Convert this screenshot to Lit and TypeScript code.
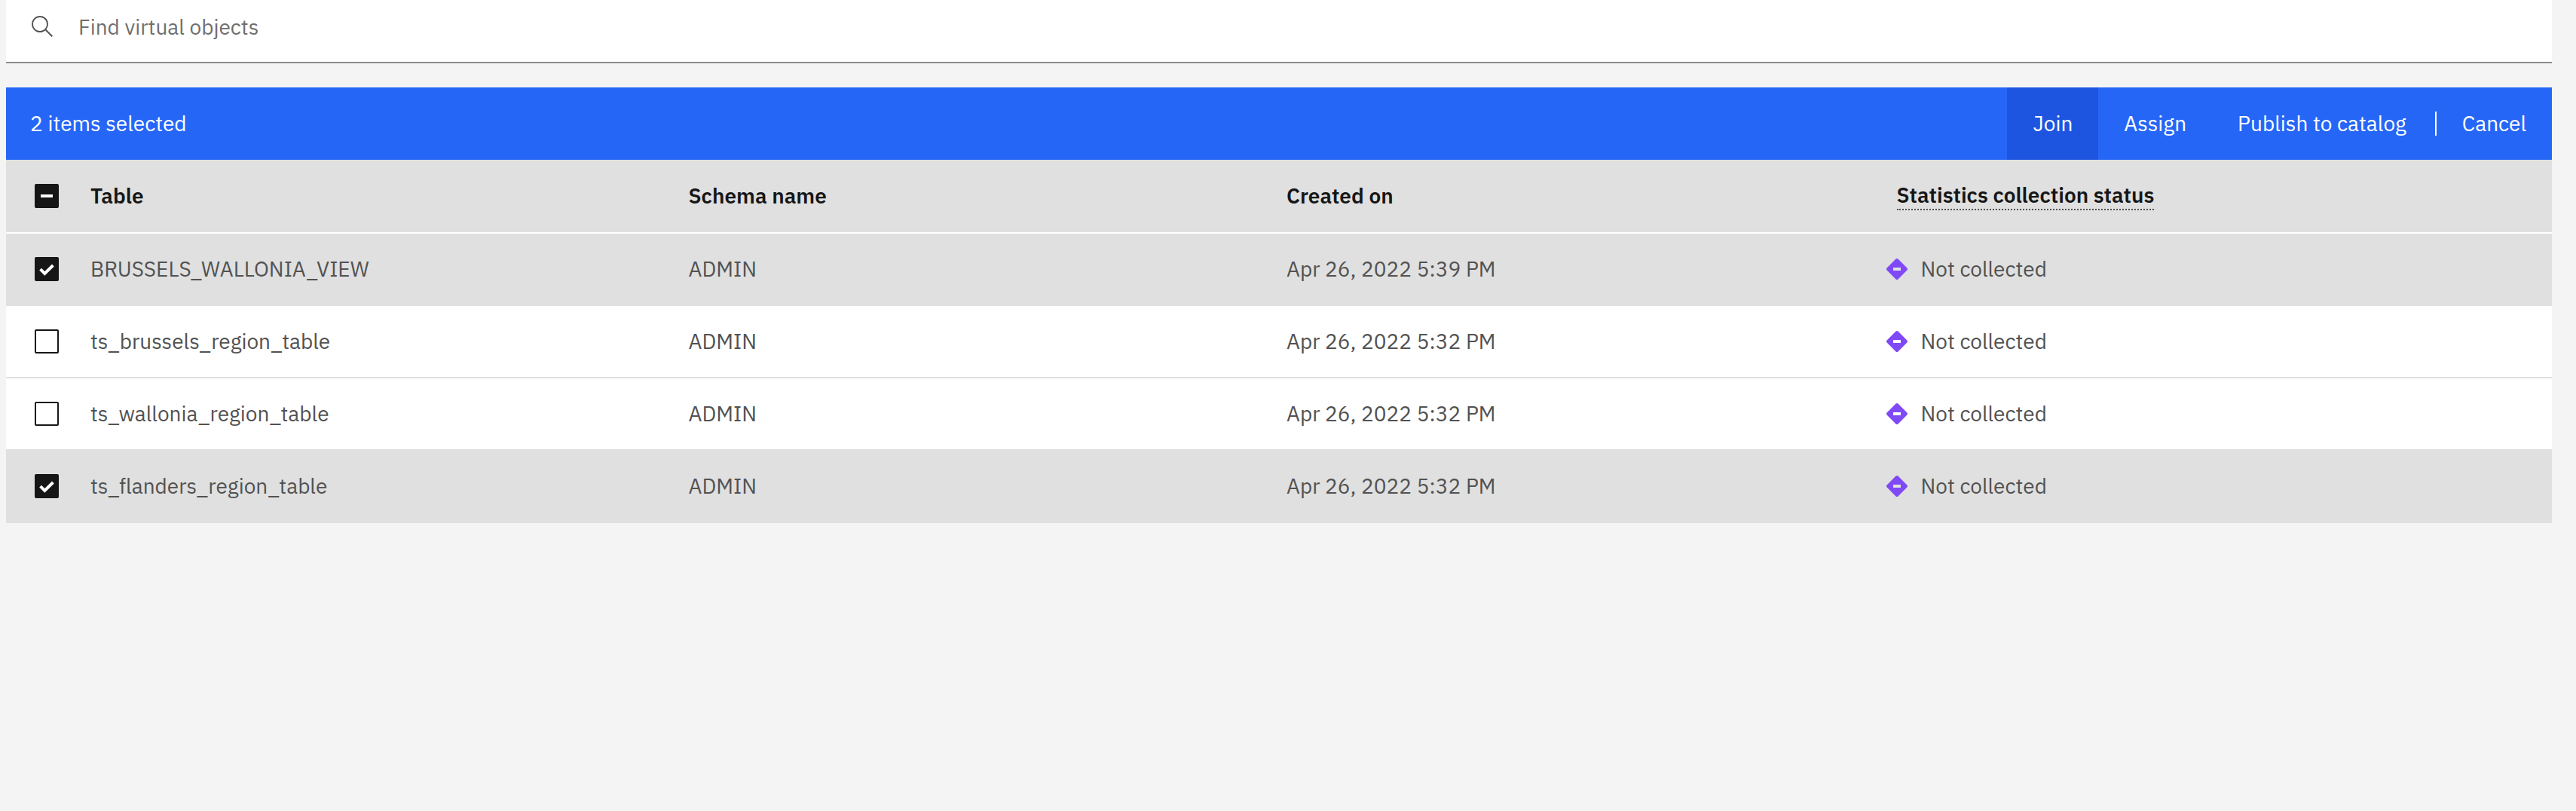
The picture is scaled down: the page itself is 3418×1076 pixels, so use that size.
import { LitElement, html, css, svg, nothing } from "lit";
import { customElement, property, state } from "lit/decorators.js";
import { classMap } from "lit/directives/class-map.js";
import { live } from "lit/directives/live.js";

interface VirtualObject {
  name: string;
  schema: string;
  created: string;
  status: string;
  selected: boolean;
}

@customElement("check-box")
class CheckBox extends LitElement {
  static styles = css`
    :host {
      display: block;
    }
    .box {
      display: grid;
      width: 32px;
      height: 32px;
    }
    .input,
    .mark {
      grid-area: 1 / 1;
      width: 32px;
      height: 32px;
    }
    .input {
      appearance: none;
      box-sizing: border-box;
      margin: 0;
      border: 2px solid #161616;
      border-radius: 2px;
      cursor: pointer;
    }
    .input:checked,
    .input:indeterminate {
      background: #161616;
    }
    .input:focus-visible {
      outline: 2px solid #0f62fe;
      outline-offset: 2px;
    }
    .mark {
      pointer-events: none;
      fill: none;
      stroke: #fff;
      stroke-width: 4;
    }
  `;

  @property() label = "";
  @property({ type: Boolean }) checked = false;
  @property({ type: Boolean }) indeterminate = false;

  private onChange() {
    this.dispatchEvent(new CustomEvent("toggle-check"));
  }

  render() {
    const mark = this.indeterminate
      ? svg`<path d="M8 16H24"/>`
      : this.checked
        ? svg`<path d="M7.6 16.2L13.3 21.9L24.4 11"/>`
        : nothing;
    return html`
      <label class="box">
        <input
          class="input"
          type="checkbox"
          aria-label=${this.label}
          .checked=${live(this.checked)}
          .indeterminate=${live(this.indeterminate)}
          @change=${this.onChange}
        />
        <svg class="mark" viewBox="0 0 32 32" aria-hidden="true">${mark}</svg>
      </label>
    `;
  }
}

@customElement("app-root")
class AppRoot extends LitElement {
  static styles = css`
    :host {
      display: block;
      box-sizing: border-box;
      min-height: 100vh;
      padding: 0 32px 32px 8px;
      background: #f4f4f4;
      color: #525252;
      font-family: "IBM Plex Sans", Roboto, "Liberation Sans", sans-serif;
      font-size: 28px;
      line-height: 36px;
    }
    .search {
      display: flex;
      align-items: center;
      gap: 32px;
      margin-bottom: 32px;
      padding: 0 32px 12px;
      border-bottom: 2px solid #8d8d8d;
      background: #fff;
    }
    .icon {
      display: block;
      flex: none;
      width: 32px;
      height: 32px;
      fill: currentColor;
    }
    .search-input {
      flex: 1;
      min-width: 0;
      height: 70px;
      padding: 0;
      border: 0;
      outline: 0;
      background: transparent;
      color: #161616;
      font: inherit;
    }
    .search-input::placeholder {
      color: #6f6f6f;
      opacity: 1;
    }
    .toolbar {
      display: flex;
      align-items: center;
      justify-content: space-between;
      padding-left: 32px;
      background: #2666f6;
      color: #fff;
    }
    .actions {
      display: flex;
      align-items: center;
    }
    .action {
      height: 96px;
      padding: 0 34px;
      border: 0;
      background: transparent;
      color: inherit;
      font: inherit;
      white-space: nowrap;
      cursor: pointer;
    }
    .action.active,
    .action:hover {
      background: #1d55e0;
    }
    .divider {
      width: 2px;
      height: 32px;
      margin-left: 4px;
      background: #fff;
    }
    .table {
      width: 100%;
      table-layout: fixed;
      border-collapse: separate;
      border-spacing: 0;
    }
    .check-col {
      width: 80px;
    }
    .end-col {
      width: 124px;
    }
    .head,
    .cell {
      box-sizing: border-box;
      height: 96px;
      padding: 0 0 0 32px;
      text-align: left;
      vertical-align: middle;
    }
    .head {
      background: #e0e0e0;
      color: #161616;
      font-weight: 600;
    }
    .cell {
      border-bottom: 2px solid #e0e0e0;
      background: #fff;
    }
    .selected .cell {
      background: #e0e0e0;
    }
    .row:first-child .cell {
      height: 98px;
      border-top: 2px solid #fff;
    }
    .head.check,
    .cell.check {
      padding-left: 38px;
    }
    .head.status-head {
      padding-left: 48px;
    }
    .term {
      display: block;
      width: fit-content;
      padding: 0;
      border: 0;
      border-bottom: 2px dotted #525252;
      background: transparent;
      color: inherit;
      font: inherit;
    }
    .status {
      display: flex;
      align-items: center;
      gap: 16px;
    }
    .status .icon {
      fill: #8049f6;
    }
  `;

  @state() private rows: VirtualObject[] = [
    { name: "BRUSSELS_WALLONIA_VIEW", schema: "ADMIN", created: "Apr 26, 2022 5:39 PM", status: "Not collected", selected: true },
    { name: "ts_brussels_region_table", schema: "ADMIN", created: "Apr 26, 2022 5:32 PM", status: "Not collected", selected: false },
    { name: "ts_wallonia_region_table", schema: "ADMIN", created: "Apr 26, 2022 5:32 PM", status: "Not collected", selected: false },
    { name: "ts_flanders_region_table", schema: "ADMIN", created: "Apr 26, 2022 5:32 PM", status: "Not collected", selected: true },
  ];

  private setAll(selected: boolean) {
    this.rows = this.rows.map((r) => ({ ...r, selected }));
  }

  private toggle(index: number) {
    this.rows = this.rows.map((r, i) => (i === index ? { ...r, selected: !r.selected } : r));
  }

  private renderRow(row: VirtualObject, index: number) {
    return html`
      <tr class=${classMap({ row: true, selected: row.selected })}>
        <td class="cell check">
          <check-box label="Select row" .checked=${row.selected} @toggle-check=${() => this.toggle(index)}></check-box>
        </td>
        <td class="cell">${row.name}</td>
        <td class="cell">${row.schema}</td>
        <td class="cell">${row.created}</td>
        <td class="cell">
          <div class="status">
            <svg class="icon" viewBox="0 0 32 32" aria-hidden="true">
              <path
                fill-rule="evenodd"
                d="M29.39 14.53L17.47 2.61a2.08 2.08 0 0 0-2.94 0L2.61 14.53a2.08 2.08 0 0 0 0 2.94L14.53 29.39a2.08 2.08 0 0 0 2.94 0L29.39 17.47a2.08 2.08 0 0 0 0-2.94ZM21 18H11V14H21Z"
              />
            </svg>
            <span>${row.status}</span>
          </div>
        </td>
        <td class="cell"></td>
      </tr>
    `;
  }

  render() {
    const count = this.rows.filter((r) => r.selected).length;
    const all = count === this.rows.length;
    return html`
      <label class="search">
        <svg class="icon" viewBox="0 0 16 16" aria-hidden="true">
          <path
            d="M15 14.3L10.7 10c1.9-2.3 1.6-5.8-.7-7.7S4.2.7 2.3 3S.7 8.8 3 10.7c2 1.7 5 1.7 7 0l4.3 4.3L15 14.3ZM2 6.5C2 4 4 2 6.5 2S11 4 11 6.5S9 11 6.5 11S2 9 2 6.5Z"
          />
        </svg>
        <input class="search-input" type="text" placeholder="Find virtual objects" aria-label="Find virtual objects" />
      </label>
      <div class="toolbar">
        <span>${count} items selected</span>
        <div class="actions">
          <button class="action active">Join</button>
          <button class="action">Assign</button>
          <button class="action">Publish to catalog</button>
          <span class="divider"></span>
          <button class="action" @click=${() => this.setAll(false)}>Cancel</button>
        </div>
      </div>
      <table class="table">
        <colgroup>
          <col class="check-col" />
          <col />
          <col />
          <col />
          <col />
          <col class="end-col" />
        </colgroup>
        <thead>
          <tr>
            <th class="head check">
              <check-box
                label="Select all rows"
                .checked=${all}
                .indeterminate=${count > 0 && !all}
                @toggle-check=${() => this.setAll(!all)}
              ></check-box>
            </th>
            <th class="head">Table</th>
            <th class="head">Schema name</th>
            <th class="head">Created on</th>
            <th class="head status-head"><button class="term">Statistics collection status</button></th>
            <th class="head"></th>
          </tr>
        </thead>
        <tbody>
          ${this.rows.map((row, i) => this.renderRow(row, i))}
        </tbody>
      </table>
    `;
  }
}
